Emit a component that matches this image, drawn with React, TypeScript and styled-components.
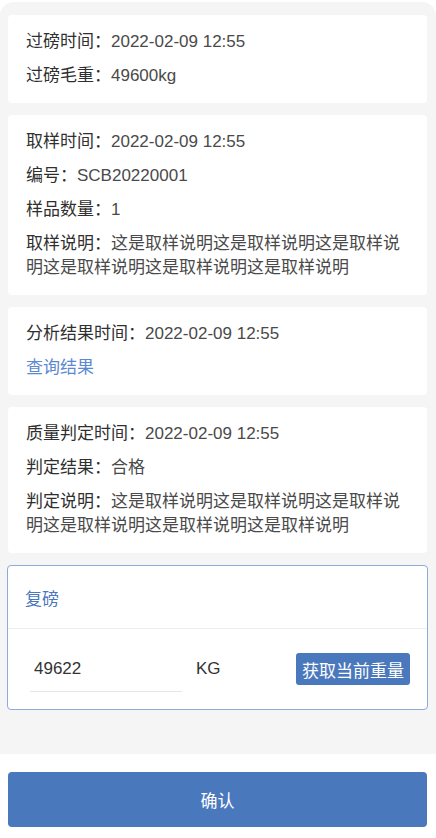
import React, { useState } from "react";
import styled, { createGlobalStyle } from "styled-components";

const GlobalStyle = createGlobalStyle`
  html, body {
    margin: 0;
    padding: 0;
    background: #ffffff;
    font-family: "Liberation Sans", "Noto Sans CJK SC", sans-serif;
  }
  * { box-sizing: border-box; }
`;

const Page = styled.div`
  width: 436px;
  padding-top: 2px;
`;

const Panel = styled.div`
  background: #f5f5f5;
  border-radius: 14px 14px 0 0;
  padding: 13px 9px 44px 8px;
  display: flex;
  flex-direction: column;
  gap: 12px;
`;

const Card = styled.div`
  background: #ffffff;
  border-radius: 4px;
  padding: 15px 18px;
  display: flex;
  flex-direction: column;
  gap: 10px;
`;

const Row = styled.div`
  font-size: 17px;
  line-height: 24px;
  color: #4a4a4a;
`;

const Label = styled.span`
  color: #2f2f2f;
`;

const Link = styled.a`
  font-size: 17px;
  line-height: 24px;
  color: #5b88d2;
  text-decoration: none;
  cursor: pointer;
`;

const RecheckBox = styled.div`
  background: #ffffff;
  border: 1px solid #8eaad8;
  border-radius: 4px;
  margin: 0 -1px;
`;

const RecheckHeader = styled.div`
  height: 63px;
  display: flex;
  align-items: center;
  padding: 0 17px;
  font-size: 17px;
  color: #4a78c0;
  border-bottom: 1px solid #eeeeee;
`;

const RecheckBody = styled.div`
  height: 80px;
  display: flex;
  align-items: center;
  padding: 0 17px 0 22px;
`;

const WeightInput = styled.input`
  width: 152px;
  height: 44px;
  border: none;
  border-bottom: 1px solid #e6e6e6;
  outline: none;
  padding: 0 4px;
  margin-top: 1px;
  font-family: inherit;
  font-size: 17px;
  color: #333333;
  background: transparent;
`;

const Unit = styled.span`
  margin-left: 14px;
  font-size: 17px;
  color: #333333;
`;

const FetchButton = styled.button`
  margin-left: auto;
  height: 32px;
  width: 114px;
  padding: 0;
  border: none;
  border-radius: 3px;
  background: #4a78bd;
  color: #ffffff;
  font-family: inherit;
  font-size: 17px;
`;

const Footer = styled.div`
  padding: 18px 9px 13px 8px;
`;

const ConfirmButton = styled.button`
  width: 100%;
  height: 55px;
  border: none;
  border-radius: 4px;
  background: #4a78bd;
  color: #ffffff;
  font-family: inherit;
  font-size: 17px;
`;

const desc = "这是取样说明这是取样说明这是取样说明这是取样说明这是取样说明这是取样说明";

export default function App() {
  const [weight, setWeight] = useState("49622");
  return (
    <Page>
      <GlobalStyle />
      <Panel>
        <Card>
          <Row><Label>过磅时间：</Label>2022-02-09 12:55</Row>
          <Row><Label>过磅毛重：</Label>49600kg</Row>
        </Card>
        <Card>
          <Row><Label>取样时间：</Label>2022-02-09 12:55</Row>
          <Row><Label>编号：</Label>SCB20220001</Row>
          <Row><Label>样品数量：</Label>1</Row>
          <Row><Label>取样说明：</Label>{desc}</Row>
        </Card>
        <Card>
          <Row><Label>分析结果时间：</Label>2022-02-09 12:55</Row>
          <Row><Link>查询结果</Link></Row>
        </Card>
        <Card>
          <Row><Label>质量判定时间：</Label>2022-02-09 12:55</Row>
          <Row><Label>判定结果：</Label>合格</Row>
          <Row><Label>判定说明：</Label>{desc}</Row>
        </Card>
        <RecheckBox>
          <RecheckHeader>复磅</RecheckHeader>
          <RecheckBody>
            <WeightInput value={weight} onChange={(e) => setWeight(e.target.value)} />
            <Unit>KG</Unit>
            <FetchButton>获取当前重量</FetchButton>
          </RecheckBody>
        </RecheckBox>
      </Panel>
      <Footer>
        <ConfirmButton>确认</ConfirmButton>
      </Footer>
    </Page>
  );
}
